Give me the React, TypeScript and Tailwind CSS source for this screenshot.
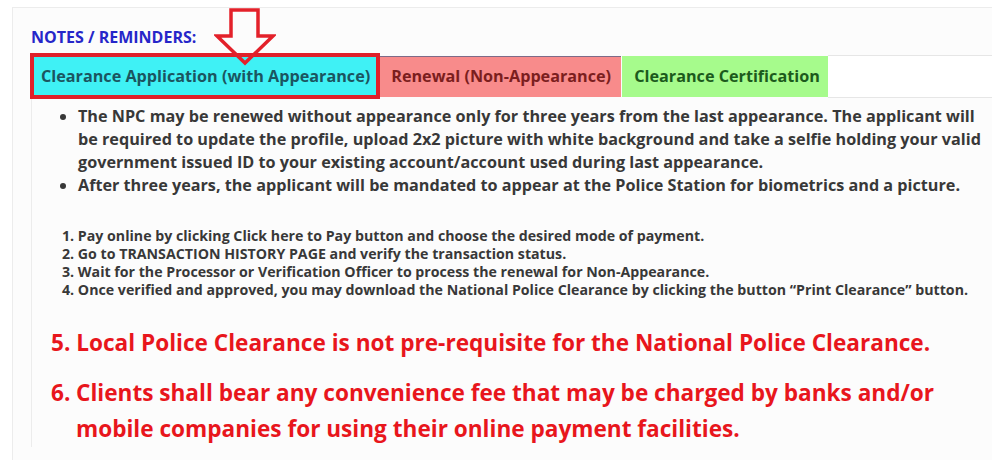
import React from 'react';

const tabs = [
  { label: 'Clearance Application (with Appearance)', bg: 'bg-[#3ff1f5]', text: 'text-[#1b5560]' },
  { label: 'Renewal (Non-Appearance)', bg: 'bg-[#f88b8b]', text: 'text-[#7b1e1e]' },
  { label: 'Clearance Certification', bg: 'bg-[#a6fb8c]', text: 'text-[#1c5a1c]' },
];

const steps = [
  '1. Pay online by clicking Click here to Pay button and choose the desired mode of payment.',
  '2. Go to TRANSACTION HISTORY PAGE and verify the transaction status.',
  '3. Wait for the Processor or Verification Officer to process the renewal for Non-Appearance.',
  '4. Once verified and approved, you may download the National Police Clearance by clicking the button \u201cPrint Clearance\u201d button.',
];

function DownArrow() {
  return (
    <svg
      className="absolute left-[184px] top-[-45px] z-20"
      width="62"
      height="58"
      viewBox="0 0 62 58"
      fill="none"
    >
      <path
        d="M17 2 H44 V28 H59 L31 55 L3 28 H17 Z"
        stroke="#e3212a"
        strokeWidth="3.5"
        strokeLinejoin="miter"
      />
    </svg>
  );
}

export default function App() {
  return (
    <div className="h-[460px] overflow-hidden bg-white pl-[12px] pt-[7px] font-['Open_Sans',sans-serif]">
      <div className="h-[480px] border-l border-t border-[#ececec] bg-[#fcfcfc] pl-[17px] pt-[18px]">
        <h2 className="pl-[1px] text-[16px] font-bold leading-[22px] text-[#2626c9]">NOTES / REMINDERS:</h2>

        <div className="relative mt-[5px] flex items-center">
          <DownArrow />
          <div className={`z-10 border-4 border-[#e0202a] ${tabs[0].bg}`}>
            <div className={`flex h-[38px] items-center pl-[7px] pr-[6px] text-[16.2px] font-bold ${tabs[0].text}`}>
              {tabs[0].label}
            </div>
          </div>
          <div className={`flex h-[41px] w-[241px] items-center border-t border-[#7d6b88] pl-[11px] text-[16.2px] font-bold ${tabs[1].bg} ${tabs[1].text}`}>
            {tabs[1].label}
          </div>
          <div className={`ml-[1px] flex h-[41px] w-[206px] items-center pl-[12px] text-[16.2px] font-bold ${tabs[2].bg} ${tabs[2].text}`}>
            {tabs[2].label}
          </div>
          <div className="h-[43px] flex-1 border-y border-[#e6e6e6] bg-white" />
        </div>

        <div className="ml-[1px] border-l border-[#ececec] pt-[6px]">
          <ul className="list-disc pl-[46px] pr-[8px] text-[16.2px] font-bold leading-[23px] text-[#383838]">
            <li>
              The NPC may be renewed without appearance only for three years from the last appearance. The applicant will be
              required to update the profile, upload 2x2 picture with white background and take a selfie holding your valid
              government issued ID to your existing account/account used during last appearance.
            </li>
            <li>After three years, the applicant will be mandated to appear at the Police Station for biometrics and a picture.</li>
          </ul>

          <div className="mt-[30px] pl-[30px] text-[14.2px] font-bold leading-[18px] text-[#383838]">
            {steps.map((s) => (
              <p key={s}>{s}</p>
            ))}
          </div>

          <div className="mt-[26px] pl-[19px] text-[22.6px] font-bold leading-[36px] text-[#e8161c]">
            <p>5. Local Police Clearance is not pre-requisite for the National Police Clearance.</p>
            <div className="mt-[14px] flex">
              <span className="w-[25px] shrink-0">6.</span>
              <p className="w-[870px]">
                Clients shall bear any convenience fee that may be charged by banks and/or mobile companies for using their
                online payment facilities.
              </p>
            </div>
          </div>
        </div>
      </div>
    </div>
  );
}
